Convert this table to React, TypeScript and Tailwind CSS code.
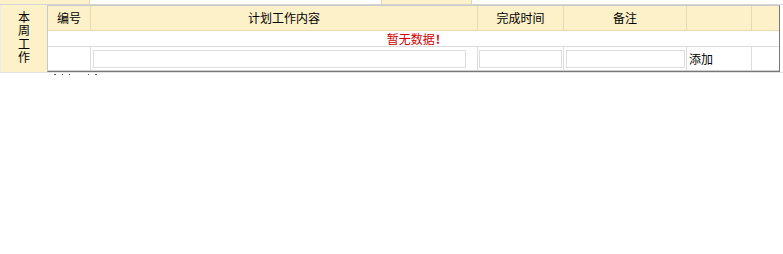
import React from "react";

const cream = "bg-[#fdf1c9]";

function HeaderCell({ w, children, last }: { w: string; children?: React.ReactNode; last?: boolean }) {
  return (
    <div className={`${w} flex items-center justify-center ${last ? "" : "border-r border-[#e6dab0]"}`}>
      {children}
    </div>
  );
}

export default function App() {
  return (
    <div className="w-[783px] h-[254px] bg-white text-[12px] text-black font-['Noto_Sans_CJK_SC','Noto_Sans',sans-serif] leading-none">
      {/* tail of the previous row */}
      <div className="flex h-[5px] border-b border-[#d6d6d6]">
        <div className={`w-[90px] ${cream} border-r border-[#e0d6b0]`} />
        <div className="w-[291px]" />
        <div className={`w-[91px] ${cream} border-x border-[#e0d6b0]`} />
        <div className="flex-1" />
      </div>

      <div className="flex h-[68px] border-b border-[#e2e2e2]">
        <div className={`w-[47px] ${cream} border-l border-[#ececec] flex items-center justify-center pb-[4px]`}>
          <p className="w-[12px] text-center leading-[13.5px] break-all">本周工作</p>
        </div>

        <div className="w-[733px] h-[67px] border border-t-[#c8c8c8] border-l-[#c8c8c8] border-r-[#777] border-b-[#777] flex flex-col">
          <div className={`flex h-[25px] ${cream} border-b border-[#e6dab0]`}>
            <HeaderCell w="w-[43px]">编号</HeaderCell>
            <HeaderCell w="w-[387px]">计划工作内容</HeaderCell>
            <HeaderCell w="w-[86px]">完成时间</HeaderCell>
            <HeaderCell w="w-[123px]">备注</HeaderCell>
            <HeaderCell w="w-[65px]" />
            <HeaderCell w="flex-1" last />
          </div>

          <div className="h-[16px] flex items-center justify-center border-b border-[#dcdcdc] text-[#d40000] font-bold">
            <span className="font-normal">暂无数据</span>
            <span className="ml-[1px]">!</span>
          </div>

          <div className="flex flex-1 border-b border-[#d0d0d0]">
            <div className="w-[43px] border-r border-[#dcdcdc]" />
            <div className="w-[387px] border-r border-[#dcdcdc] flex items-center pl-[2px]">
              <div className="w-[373px] h-[18px] border border-[#dedede] bg-white" />
            </div>
            <div className="w-[86px] border-r border-[#dcdcdc] flex items-center px-[1px]">
              <div className="w-full h-[18px] border border-[#dedede] bg-white" />
            </div>
            <div className="w-[123px] border-r border-[#dcdcdc] flex items-center pl-[2px] pr-[1px]">
              <div className="w-full h-[18px] border border-[#dedede] bg-white" />
            </div>
            <div className="w-[65px] border-r border-[#dcdcdc] flex items-center pl-[2px]">
              <span className="cursor-pointer">添加</span>
            </div>
            <div className="flex-1" />
          </div>
        </div>
      </div>

      {/* top of the next row, cut off */}
      <div className="h-[3px] overflow-hidden pl-[54px]">
        <div className="mt-[1px] flex gap-[6px]">
          <span className="w-[2px] h-[1px] bg-[#555]" />
          <span className="w-[1px] h-[1px] bg-[#555]" />
          <span className="w-[1px] h-[1px] bg-[#555]" />
          <span className="w-[1px] h-[1px] bg-[#555] ml-[12px]" />
          <span className="w-[2px] h-[1px] bg-[#555]" />
        </div>
      </div>
    </div>
  );
}
